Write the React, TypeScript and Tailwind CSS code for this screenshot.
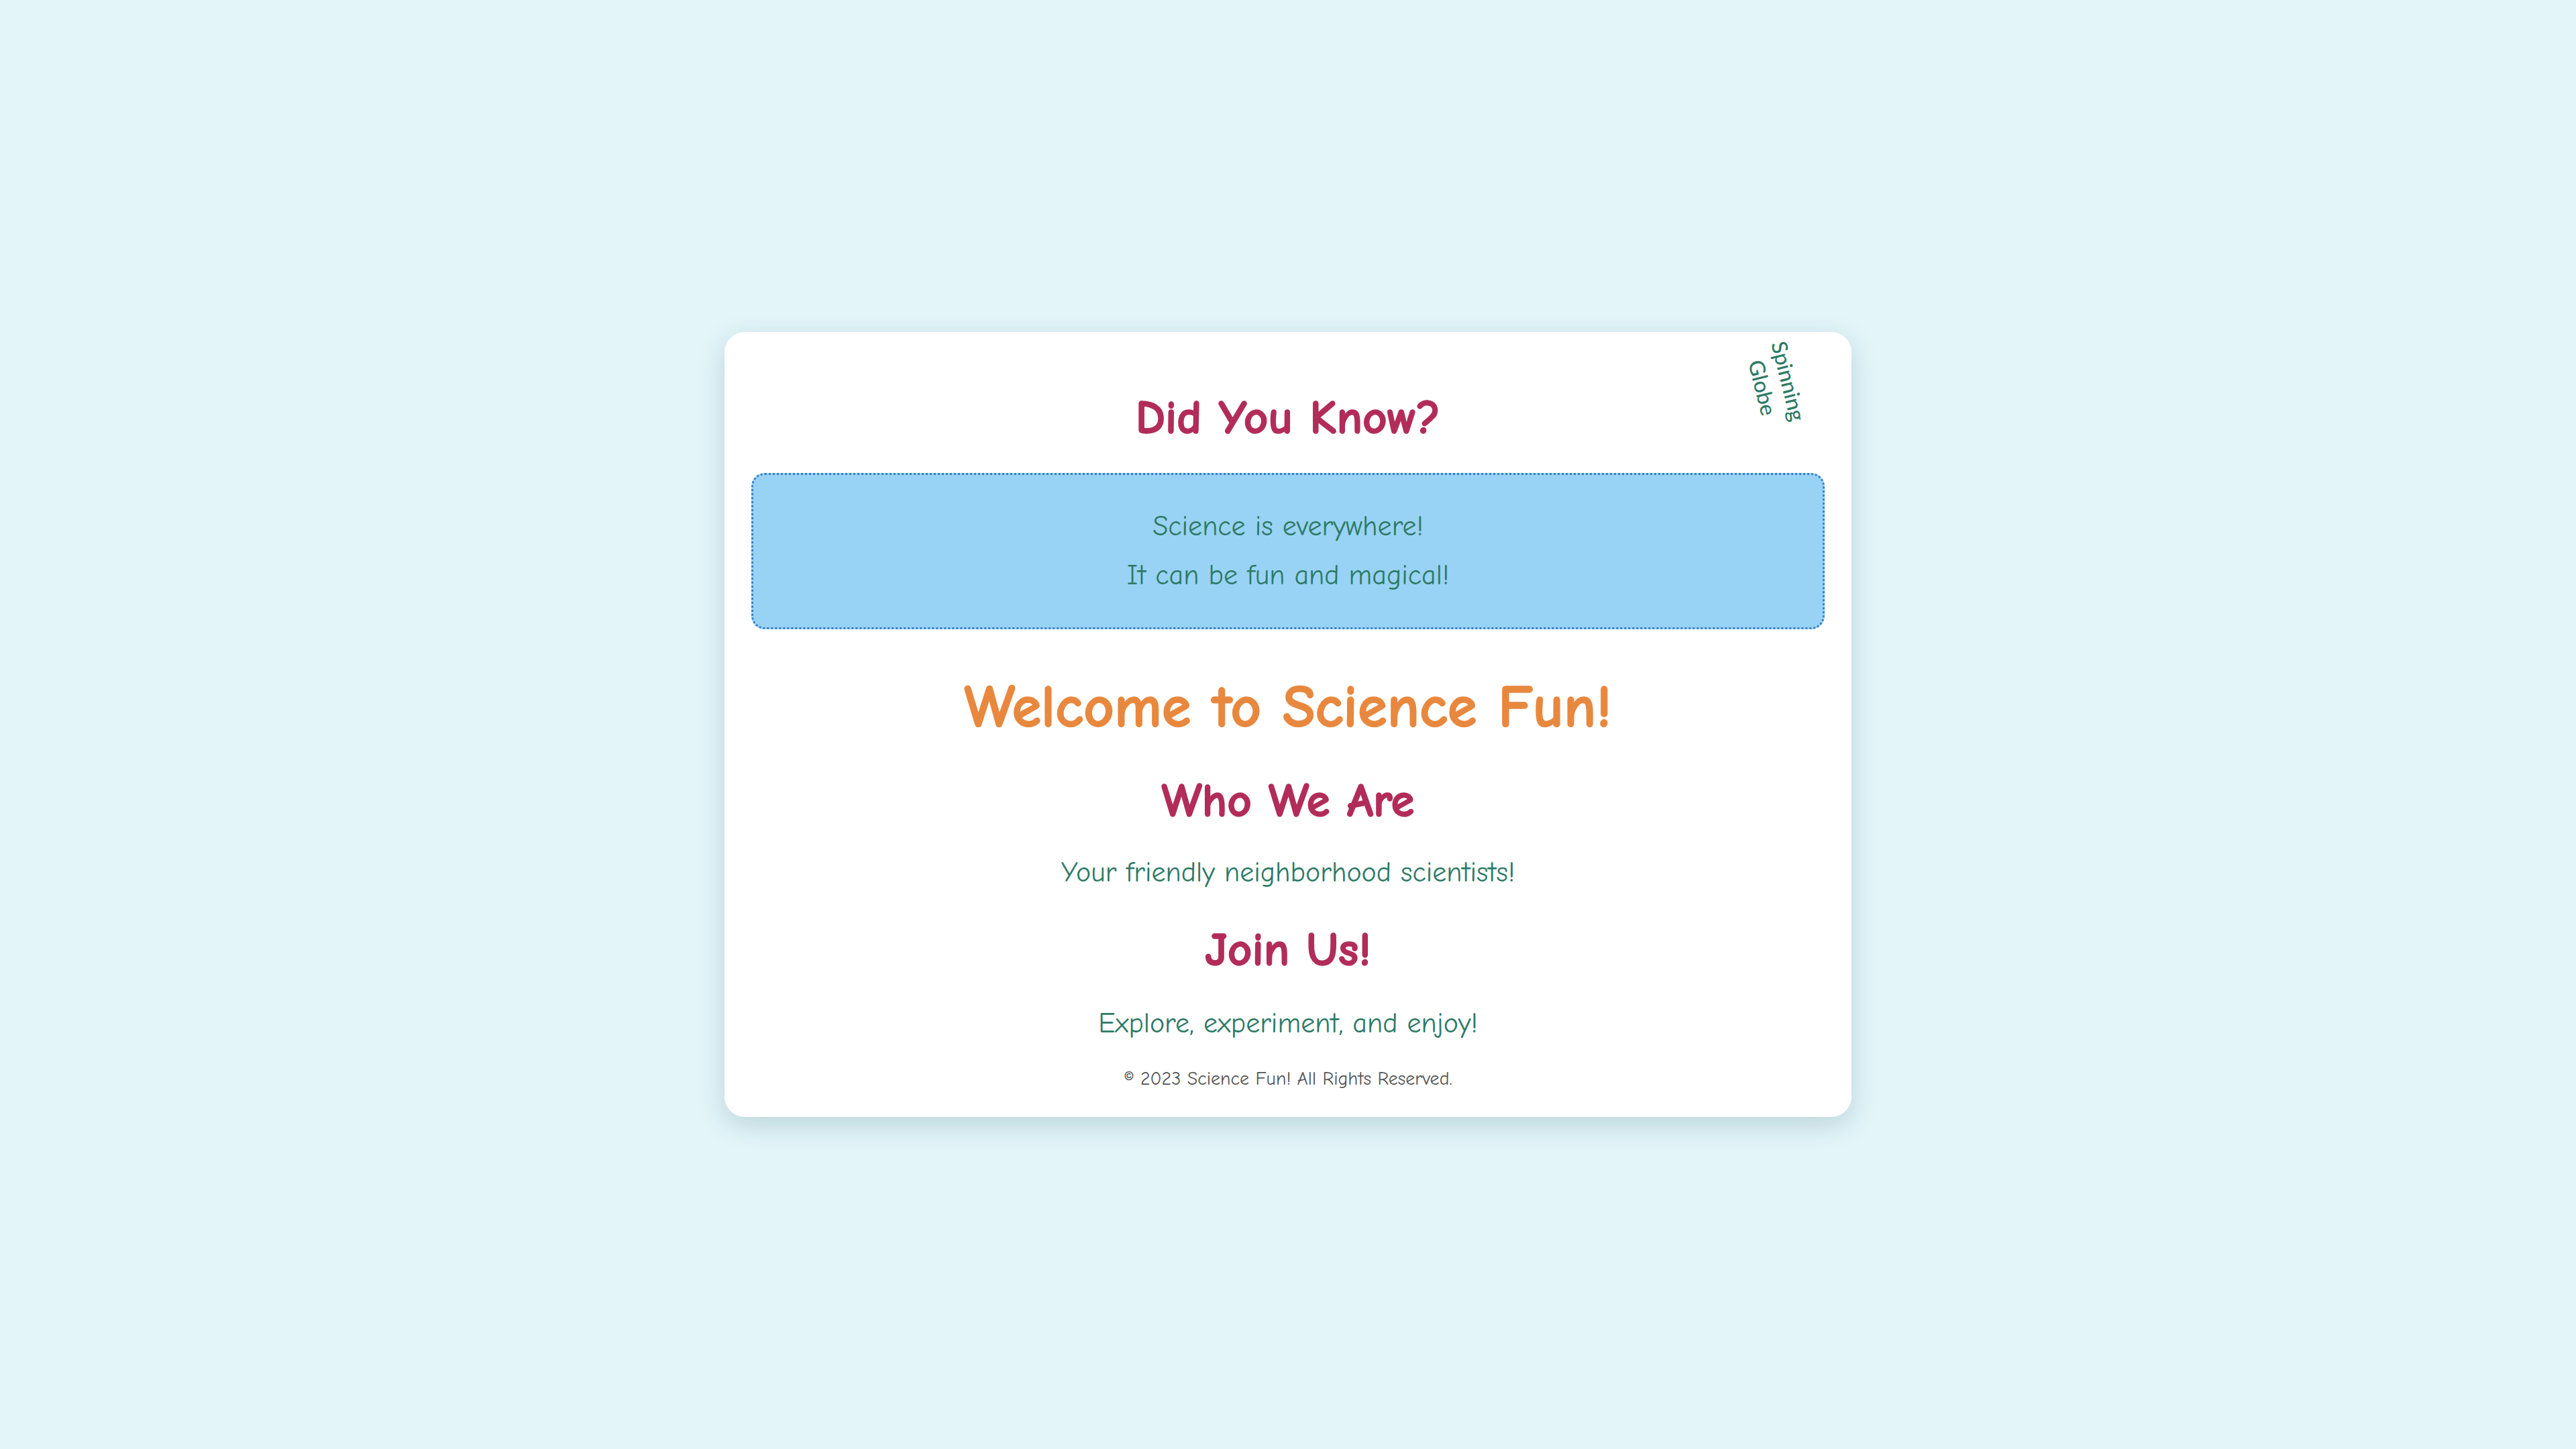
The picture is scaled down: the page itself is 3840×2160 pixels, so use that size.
export default function App() {
  const fun = 'font-["Comic_Sans_MS","Comic_Neue",cursive]';
  const heading = 'font-bold [-webkit-text-stroke:1.5px_currentColor]';
  return (
    <div className={`min-h-screen w-full bg-[#e3f5f9] flex items-center justify-center ${fun}`}>
      <div className="relative w-[1680px] rounded-[30px] bg-white px-[40px] pt-[88px] pb-[37px] shadow-[0_12px_40px_rgba(0,60,80,0.18)] text-center">
        {/* spinning globe (image alt text, caught mid-spin) */}
        <div className="absolute top-[38px] right-[33px] w-[160px] rotate-[76deg] font-['Lato',sans-serif] font-medium text-[32px] leading-[40px] text-[#2e7a66]">
          Spinning Globe
        </div>

        <h2 className={`text-[71px] leading-[80px] text-[#b22c5a] ${heading}`}>Did You Know?</h2>

        <div className="mt-[42px] rounded-[20px] border-[3px] border-dotted border-[#3a7fc6] bg-[#98d3f5] p-[47px] flex flex-col gap-[13px]">
          <p className="text-[42px] leading-[60px] text-[#2e7a66]">Science is everywhere!</p>
          <p className="text-[42px] leading-[60px] text-[#2e7a66]">It can be fun and magical!</p>
        </div>

        <h1 className={`mt-[66px] text-[89px] leading-[100px] text-[#e8883e] ${heading}`}>Welcome to Science Fun!</h1>

        <h2 className={`mt-[50px] text-[71px] leading-[80px] text-[#b22c5a] ${heading}`}>Who We Are</h2>
        <p className="mt-[37px] text-[42px] leading-[60px] text-[#2e7a66]">Your friendly neighborhood scientists!</p>

        <h2 className={`mt-[45px] text-[71px] leading-[80px] text-[#b22c5a] ${heading}`}>Join Us!</h2>
        <p className="mt-[40px] text-[42px] leading-[60px] text-[#2e7a66]">Explore, experiment, and enjoy!</p>

        <p className="mt-[32px] text-[28px] leading-[40px] text-[#555555]">© 2023 Science Fun! All Rights Reserved.</p>
      </div>
    </div>
  );
}
